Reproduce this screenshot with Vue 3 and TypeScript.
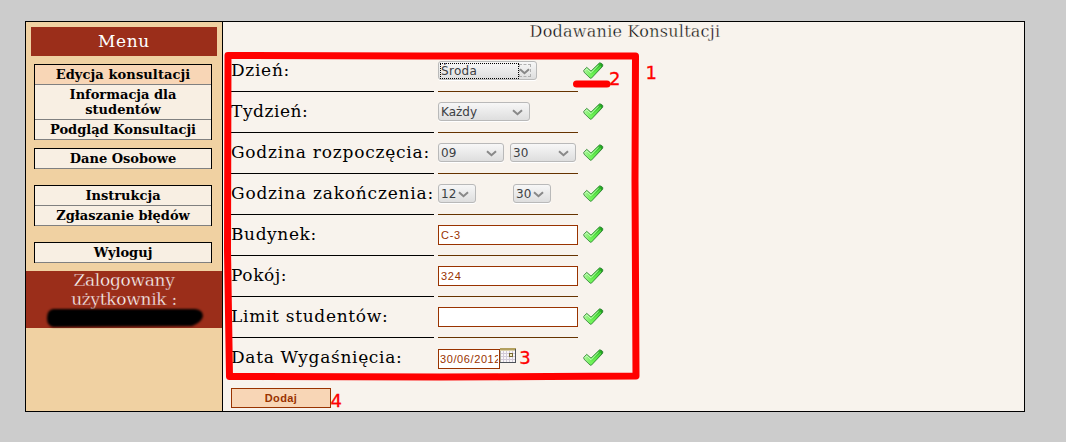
<script setup lang="ts">
import { ref } from 'vue'

interface SelectBox {
  value: string
  width: number
  arrow: number
  focused?: boolean
}

interface FormRow {
  label: string
  spacing: number
  selects?: SelectBox[]
  gap?: number
  input?: string
  date?: string
}

interface MenuItem {
  text: string
  active?: boolean
}

const menuGroups: MenuItem[][] = [
  [
    { text: 'Edycja konsultacji', active: true },
    { text: 'Informacja dla studentów' },
    { text: 'Podgląd Konsultacji' },
  ],
  [{ text: 'Dane Osobowe' }],
  [{ text: 'Instrukcja' }, { text: 'Zgłaszanie błędów' }],
  [{ text: 'Wyloguj' }],
]

const rows = ref<FormRow[]>([
  { label: 'Dzień:', spacing: 0.7, selects: [{ value: 'Środa', width: 99, arrow: 79.5, focused: true }] },
  { label: 'Tydzień:', spacing: 0.55, selects: [{ value: 'Każdy', width: 92, arrow: 72.5 }] },
  {
    label: 'Godzina rozpoczęcia:',
    spacing: 0.78,
    gap: 6,
    selects: [
      { value: '09', width: 66, arrow: 46.5 },
      { value: '30', width: 66, arrow: 46.5 },
    ],
  },
  {
    label: 'Godzina zakończenia:',
    spacing: 0.8,
    gap: 37,
    selects: [
      { value: '12', width: 38, arrow: 18.5 },
      { value: '30', width: 38, arrow: 18.5 },
    ],
  },
  { label: 'Budynek:', spacing: 0.6, input: 'C-3' },
  { label: 'Pokój:', spacing: 0.6, input: '324' },
  { label: 'Limit studentów:', spacing: 0.7, input: '' },
  { label: 'Data Wygaśnięcia:', spacing: 0.68, date: '30/06/2012' },
])
</script>

<template>
  <div class="page">
    <aside class="sidebar">
      <h1 class="menu-title">Menu</h1>
      <nav>
        <ul v-for="(group, g) in menuGroups" :key="g" class="group" :class="'group-' + g">
          <li v-for="item in group" :key="item.text" :class="{ active: item.active }">{{ item.text }}</li>
        </ul>
      </nav>
      <div class="user">
        Zalogowany<br />użytkownik :
        <svg class="redacted" width="164" height="26" viewBox="0 0 164 26">
          <path d="M10 4 L152 4 Q160 5 160 11 Q159 17 149 21 L10 22 Q4 21 4 13 Q4 5 10 4Z" />
        </svg>
      </div>
    </aside>

    <main class="content">
      <h2 class="heading">Dodawanie Konsultacji</h2>
      <form class="form" @submit.prevent>
        <div v-for="row in rows" :key="row.label" class="row">
          <label class="label" :style="{ letterSpacing: row.spacing + 'px' }">{{ row.label }}</label>
          <div class="field" :style="{ gap: (row.gap ?? 0) + 'px' }">
            <div
              v-for="(s, i) in row.selects"
              :key="i"
              class="select"
              :class="{ focused: s.focused }"
              :style="{ width: s.width + 'px' }"
            >
              <span class="value">{{ s.value }}</span>
              <svg class="arrow" :style="{ left: s.arrow + 'px' }" width="11" height="7" viewBox="0 0 11 7">
                <path d="M1 1.2 L5.5 5.2 L10 1.2" fill="none" stroke="#888" stroke-width="2" />
              </svg>
            </div>
            <input v-if="row.input !== undefined" v-model="row.input" class="input" type="text" />
            <template v-if="row.date !== undefined">
              <input v-model="row.date" class="input date" type="text" />
              <svg class="calendar" width="16" height="15" viewBox="0 0 16 15" shape-rendering="crispEdges">
                <rect width="16" height="15" fill="#f8f6f8" />
                <path d="M3.5 3V14M6.5 3V14M9.5 3V14M12.5 3V14M0 5.5H15M0 8.5H15M0 11.5H15" stroke="#d2cad8" />
                <path d="M.5 0V14" stroke="#b0aca0" />
                <rect width="16" height="2" fill="#b3a05f" />
                <rect y="2" width="16" height="1" fill="#d9cfaa" />
                <rect x="9.5" y="5.5" width="3" height="3" fill="#f4eec5" stroke="#776a35" />
                <path d="M15.5 1V15M0 14.5H16" stroke="#4c5259" />
              </svg>
            </template>
          </div>
          <svg class="check" width="21" height="18" viewBox="0 0 21 18">
            <defs>
              <linearGradient id="leaf" x1="0" y1="0.2" x2="1" y2="0.3">
                <stop offset="0" stop-color="#b5f5a5" />
                <stop offset="0.45" stop-color="#6cf056" />
                <stop offset="0.75" stop-color="#3dc732" />
                <stop offset="1" stop-color="#139016" />
              </linearGradient>
            </defs>
            <path
              d="M.7 8.4 L3.7 5.3 L8 9.1 L16.4 .9 Q18 .5 19.9 2.7 L19.6 4.4 L8.4 16.2 L7.2 16.2 L1 10.2Z"
              fill="url(#leaf)"
              stroke="#2f7d33"
              stroke-width=".8"
            />
            <path d="M2.2 8.5 L3.8 6.9 L8 10.7 L15.4 3.3" fill="none" stroke="#d7ffd0" stroke-width="1" opacity=".75" />
            <path d="M7.8 14.8 L17.9 4.3" stroke="#7cff60" stroke-width="1.4" opacity=".55" />
          </svg>
        </div>
        <button class="submit" type="submit">Dodaj</button>
      </form>
    </main>

    <svg class="marks" width="1066" height="442" viewBox="0 0 1066 442">
      <g class="soft" fill="none" stroke="#f00" stroke-width="7" stroke-linecap="round" stroke-linejoin="round">
        <path d="M228 55.5 L420 56 L635.5 56 L635 180 L636 376 L440 377 L229.5 376.5 L227.5 250 Z" />
        <path d="M576.5 84 L607 84" />
      </g>
      <g class="digits">
        <text x="645.5" y="79">1</text>
        <text x="609" y="85">2</text>
        <text x="519.3" y="364">3</text>
        <text x="330.6" y="407">4</text>
      </g>
    </svg>
  </div>
</template>

<style>
body {
  margin: 0;
  background: #ccc;
}
</style>

<style scoped>
.page {
  position: relative;
  box-sizing: border-box;
  width: 1066px;
  height: 442px;
  padding: 21px 41px 30px 25px;
  display: flex;
  font-family: 'DejaVu Serif', serif;
  color: #000;
  overflow: hidden;
}

.sidebar {
  box-sizing: border-box;
  width: 198px;
  height: 391px;
  border: 1px solid #000;
  background: #f0d1a2;
}

.menu-title {
  margin: 5px 5px 8px;
  height: 29px;
  background: #9b2e1a;
  color: #fff;
  font-size: 17px;
  font-weight: 400;
  line-height: 29px;
  text-align: center;
  letter-spacing: 0.6px;
}

.group {
  list-style: none;
  margin: 0 10px 0 8px;
  padding: 0;
  border: 1px solid #000;
  border-bottom: 0;
  background: #f8efe3;
}

.group-1 {
  margin-top: 8px;
}

.group-2,
.group-3 {
  margin-top: 16px;
}

.group li {
  padding: 2px 10px;
  border-bottom: 1px solid #808080;
  font-size: 13px;
  font-weight: 700;
  line-height: 15px;
  text-align: center;
}

.group li.active {
  background: #f8d6b6;
  letter-spacing: 0.1px;
}

.user {
  position: relative;
  margin-top: 8px;
  height: 57px;
  background: #9b2e1a;
  color: #fff;
  font-size: 17px;
  letter-spacing: -0.3px;
  line-height: 19px;
  text-align: center;
  -webkit-text-stroke: 0.35px #9b2e1a;
}

.redacted {
  position: absolute;
  left: 17px;
  top: 34px;
  filter: blur(0.8px);
}

.content {
  box-sizing: border-box;
  width: 802px;
  height: 391px;
  border: 1px solid #000;
  border-left: 0;
  background: #f8f3ed;
}

.heading {
  margin: 0;
  height: 29px;
  padding-left: 3px;
  font-size: 16px;
  font-weight: 400;
  letter-spacing: 0.25px;
  line-height: 19px;
  text-align: center;
  -webkit-text-stroke: 0.35px #f8f3ed;
}

.form {
  padding-left: 8px;
}

.row {
  display: flex;
  height: 41px;
}

.label {
  box-sizing: border-box;
  width: 203px;
  margin-right: 4px;
  border-bottom: 1px solid #000;
  font-size: 17px;
  line-height: 39px;
  white-space: nowrap;
}

.field {
  box-sizing: border-box;
  display: flex;
  align-items: flex-start;
  width: 140px;
  padding-top: 10px;
  border-bottom: 1px solid #663300;
}

.row:nth-child(8) .label,
.row:nth-child(8) .field {
  border-bottom: 0;
}

.select {
  position: relative;
  box-sizing: border-box;
  height: 19px;
  border: 1px solid #b9b9b9;
  border-radius: 3px;
  background: linear-gradient(#f7f7f7, #dedede);
  box-shadow: 0 1px 0 #fff;
  color: #3c4043;
  font-family: 'DejaVu Sans', sans-serif;
  font-size: 12px;
  line-height: 19px;
}

.value {
  display: block;
  padding-left: 2px;
}

.focused .value {
  box-sizing: border-box;
  width: 79px;
  height: 16px;
  margin: 1px 0 0 1px;
  padding-left: 0;
  border: 1px dotted #000;
  line-height: 15px;
  letter-spacing: 0.3px;
}

.focused::after {
  content: '';
  position: absolute;
  box-sizing: border-box;
  left: 80px;
  top: 2px;
  width: 12px;
  height: 13px;
  border: 1px dashed #b0b0b0;
}

.arrow {
  position: absolute;
  top: 5.5px;
}

.input {
  box-sizing: border-box;
  width: 140px;
  height: 20px;
  margin: 0;
  padding: 0 2px;
  border: 1px solid #993300;
  border-radius: 0;
  outline: 0;
  background: #fff;
  color: #993300;
  font-family: 'Liberation Sans', Arial, sans-serif;
  font-size: 11px;
  letter-spacing: 0.7px;
}

.date {
  width: 62px;
  margin-top: 1px;
  padding: 0 1px;
  letter-spacing: 0.6px;
}

.calendar {
  flex: none;
}

.check {
  margin: 11px 0 0 5px;
}

.submit {
  display: block;
  box-sizing: border-box;
  width: 100px;
  height: 20px;
  margin: 9px 0 0;
  padding: 0;
  border: 1px solid #993300;
  background: #f8d6b6;
  color: #993300;
  font-family: 'Liberation Sans', Arial, sans-serif;
  font-size: 11px;
  font-weight: 700;
  letter-spacing: 0.4px;
}

.marks {
  position: absolute;
  left: 0;
  top: 0;
  pointer-events: none;
}

.soft {
  filter: blur(0.6px);
}

.digits {
  fill: #f00;
  stroke: #f00;
  stroke-width: 0.3px;
  font-family: 'DejaVu Sans', sans-serif;
  font-size: 18px;
}
</style>
